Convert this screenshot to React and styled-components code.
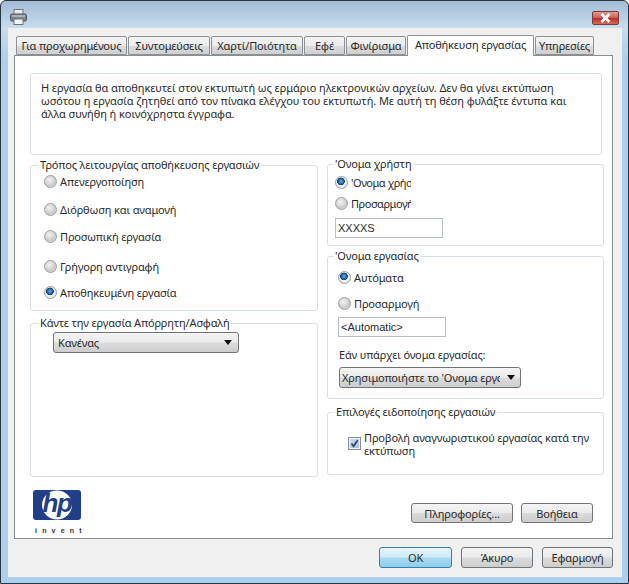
import React from 'react';
import styled, { createGlobalStyle } from 'styled-components';

const GlobalStyle = createGlobalStyle`
  html, body {
    margin: 0;
    padding: 0;
    background: #fff;
  }
  body {
    font-family: "Noto Sans", "DejaVu Sans", sans-serif;
    font-size: 11px;
    letter-spacing: -0.15px;
    color: #2a2a2a;
  }
`;

const Window = styled.div`
  box-sizing: border-box;
  width: 629px;
  height: 584px;
  display: flex;
  flex-direction: column;
  overflow: hidden;
  border: 1px solid #27343f;
  border-radius: 6px 6px 0 0;
  background: linear-gradient(#a3bcd3 0, #b4cde3 14px, #c9dcec 27px, #abcfec 60px);
`;

const TitleBar = styled.div`
  height: 27px;
  flex: none;
  display: flex;
  align-items: center;
  justify-content: space-between;
  padding: 5px 9px 0 9px;
  box-sizing: border-box;
`;

const CloseButton = styled.div`
  width: 27px;
  height: 14px;
  margin-top: 2px;
  display: flex;
  align-items: center;
  justify-content: center;
  border: 1px solid #7d3a38;
  border-radius: 2px;
  box-sizing: border-box;
  background: linear-gradient(#dc9c90 0, #d0625a 45%, #b8302a 55%, #d86a58 100%);
`;

const Client = styled.div`
  flex: 1;
  margin: 0 6px 6px 7px;
  padding: 7px 9px 0 6px;
  display: flex;
  flex-direction: column;
  min-height: 0;
  background: #f0f0f0;
`;

const TabRow = styled.div`
  display: flex;
  align-items: flex-end;
  height: 20px;
  padding-left: 2px;
  gap: 1px;
  position: relative;
  z-index: 1;
`;

const Tab = styled.div`
  box-sizing: border-box;
  width: ${p => p.$w}px;
  height: ${p => (p.$active ? 21 : 19)}px;
  margin: ${p => (p.$active ? '0 0 -1px 0' : '0')};
  padding-bottom: ${p => (p.$active ? 3 : 0)}px;
  display: flex;
  align-items: center;
  justify-content: center;
  white-space: nowrap;
  border: 1px solid #8e9297;
  border-bottom: ${p => (p.$active ? 'none' : '1px solid #8e9297')};
  border-radius: 2px 2px 0 0;
  background: ${p => (p.$active ? '#fff' : 'linear-gradient(#f4f4f4 0, #ececec 50%, #dcdcdc 52%, #cfcfcf 100%)')};
`;

const Panel = styled.div`
  box-sizing: border-box;
  height: 484px;
  padding: 17px 7px 0 15px;
  border: 1px solid #8a8d90;
  background: #fff;
`;

const Description = styled.div`
  box-sizing: border-box;
  height: 82px;
  margin-right: 3px;
  padding: 7px 10px;
  border: 1px solid #d5dfe5;
  border-radius: 3px;
  line-height: 13px;
  letter-spacing: -0.07px;
  white-space: nowrap;
`;

const Columns = styled.div`
  display: grid;
  grid-template-columns: 288px 277px;
  column-gap: 9px;
  margin-top: 3px;
`;

const Column = styled.div`
  display: flex;
  flex-direction: column;
  gap: ${p => p.$gap}px;
  margin-top: ${p => p.$top || 0}px;
`;

const Group = styled.fieldset`
  box-sizing: border-box;
  height: ${p => p.$h}px;
  margin: 0 0 ${p => p.$after || 0}px;
  min-width: 0;
  padding: 0 0 0 ${p => p.$left}px;
  border: 1px solid #d5dfe5;
  border-radius: 3px;
`;

const Legend = styled.legend`
  margin-left: ${p => p.$x - p.$left}px;
  padding: 0 2px;
  height: 12px;
  line-height: 12px;
  white-space: nowrap;
`;

const RadioRow = styled.div`
  display: flex;
  align-items: center;
  height: 14px;
  gap: 3px;
  margin-top: ${p => p.$top}px;
`;

const RadioDot = styled.span`
  box-sizing: border-box;
  width: 13px;
  height: 13px;
  flex: none;
  border-radius: 50%;
  border: 1px solid #9a9ea3;
  background: ${p => (p.$on
    ? 'radial-gradient(circle at 45% 40%, #6fb0e0 0, #1c5f9c 30%, #10406f 40%, #f0f2f4 46%, #dcdfe3 100%)'
    : 'radial-gradient(circle at 40% 35%, #f1f1f1 0, #d6d6d6 45%, #c8c8c8 60%, #ececec 100%)')};
`;

const RadioLabel = styled.span`
  display: block;
  white-space: nowrap;
  overflow: hidden;
  max-width: ${p => p.$max || 240}px;
  letter-spacing: ${p => p.$spacing ?? -0.15}px;
`;

const TextField = styled.div`
  box-sizing: border-box;
  width: 108px;
  height: 20px;
  margin-top: ${p => p.$top}px;
  padding-left: 2px;
  border: 1px solid #b5bcc4;
  line-height: 18px;
  letter-spacing: 0;
  font-family: "Liberation Sans", sans-serif;
`;

const Select = styled.div`
  box-sizing: border-box;
  width: ${p => p.$w}px;
  height: 21px;
  margin: ${p => p.$margin};
  padding: 0 ${p => p.$right}px 0 ${p => p.$pad}px;
  display: flex;
  align-items: center;
  justify-content: space-between;
  white-space: nowrap;
  border: 1px solid #70757a;
  border-radius: 3px;
  background: linear-gradient(#f4f4f4 0, #ebebeb 48%, #dcdcdc 52%, #cdcdcd 100%);
`;

const Arrow = styled.span`
  width: 0;
  height: 0;
  flex: none;
  border-left: 4px solid transparent;
  border-right: 4px solid transparent;
  border-top: 5px solid #111;
`;

const FieldCaption = styled.div`
  height: 13px;
  line-height: 13px;
  margin: 11px 0 0 1px;
`;

const CheckRow = styled.div`
  display: flex;
  gap: 3px;
  margin: 13px 0 0 20px;
  line-height: 13px;
`;

const CheckBox = styled.span`
  box-sizing: border-box;
  width: 13px;
  height: 13px;
  margin-top: 6px;
  flex: none;
  display: flex;
  align-items: center;
  justify-content: center;
  border: 1px solid #8b8f94;
  background: linear-gradient(135deg, #d2deec, #a8bed8);
  box-shadow: inset 0 0 0 1px #eef2f6;
`;

const Footer = styled.div`
  display: flex;
  justify-content: space-between;
  align-items: flex-start;
  padding: 0 12px 0 3px;
`;

const LogoBlock = styled.div`
  margin-top: 13px;
  width: 48px;
`;

const Invent = styled.div`
  margin-top: 4px;
  padding-left: 2px;
  font-family: "Liberation Sans", sans-serif;
  font-size: 7px;
  font-weight: bold;
  line-height: 8px;
  letter-spacing: 5.2px;
  white-space: nowrap;
  color: #333;
`;

const ButtonRow = styled.div`
  display: flex;
  justify-content: flex-end;
  gap: ${p => p.$gap}px;
  margin-top: ${p => p.$top}px;
`;

const Button = styled.div`
  box-sizing: border-box;
  width: ${p => p.$w}px;
  height: ${p => (p.$tall ? 21 : 20)}px;
  display: flex;
  align-items: center;
  justify-content: center;
  white-space: nowrap;
  border: 1px solid ${p => (p.$primary ? '#3d7ea8' : '#70757a')};
  border-radius: 3px;
  background: ${p => (p.$primary
    ? 'linear-gradient(#e8f5fb 0, #cdeaf8 48%, #a8d9f2 52%, #8fcdec 100%)'
    : 'linear-gradient(#f4f4f4 0, #ebebeb 48%, #dcdcdc 52%, #cdcdcd 100%)')};
`;

const PrinterIcon = () => (
  <svg width="17" height="16" viewBox="0 0 17 16">
    <rect x="4" y="0.5" width="9" height="5" fill="#e8eaec" stroke="#6f767c" />
    <rect x="0.5" y="5" width="16" height="7" rx="1.5" fill="#7d868d" stroke="#4c5358" />
    <rect x="2" y="6" width="13" height="2" fill="#a9b1b7" />
    <rect x="4" y="10" width="9" height="5.5" fill="#f2f3f4" stroke="#6f767c" />
  </svg>
);

const CloseIcon = () => (
  <svg width="11" height="10" viewBox="0 0 11 10">
    <path d="M1.5 1 L9.5 9 M9.5 1 L1.5 9" stroke="#fff" strokeWidth="2.6" />
  </svg>
);

const CheckIcon = () => (
  <svg width="9" height="9" viewBox="0 0 9 9">
    <path d="M1.5 4.5 L3.6 7.2 L7.6 1.2" fill="none" stroke="#2b3f78" strokeWidth="1.7" />
  </svg>
);

const HpLogo = () => (
  <svg width="48" height="30" viewBox="0 0 48 30">
    <rect width="48" height="30" rx="3" fill="#213f87" />
    <ellipse cx="24" cy="15" rx="15" ry="14.5" fill="#fff" />
    <text
      x="24"
      y="21.5"
      textAnchor="middle"
      fontFamily="Liberation Sans, sans-serif"
      fontStyle="italic"
      fontWeight="bold"
      fontSize="26"
      letterSpacing="-1.5"
      fill="#213f87"
    >
      hp
    </text>
  </svg>
);

const Radio = ({ on, top, max, spacing, children }) => (
  <RadioRow $top={top}>
    <RadioDot $on={on} />
    <RadioLabel $max={max} $spacing={spacing}>{children}</RadioLabel>
  </RadioRow>
);

const tabs = [
  { label: 'Για προχωρημένους', w: 111 },
  { label: 'Συντομεύσεις', w: 82 },
  { label: 'Χαρτί/Ποιότητα', w: 92 },
  { label: 'Εφέ', w: 41 },
  { label: 'Φινίρισμα', w: 60 },
  { label: 'Αποθήκευση εργασίας', w: 127, active: true },
  { label: 'Υπηρεσίες', w: 59 },
];

export default function App() {
  return (
    <>
      <GlobalStyle />
      <Window>
        <TitleBar>
          <PrinterIcon />
          <CloseButton><CloseIcon /></CloseButton>
        </TitleBar>
        <Client>
          <TabRow>
            {tabs.map(t => (
              <Tab key={t.label} $w={t.w} $active={t.active}>{t.label}</Tab>
            ))}
          </TabRow>
          <Panel>
            <Description>
              Η εργασία θα αποθηκευτεί στον εκτυπωτή ως ερμάριο ηλεκτρονικών αρχείων. Δεν θα γίνει εκτύπωση<br />
              ωσότου η εργασία ζητηθεί από τον πίνακα ελέγχου του εκτυπωτή. Με αυτή τη θέση φυλάξτε έντυπα και<br />
              άλλα συνήθη ή κοινόχρηστα έγγραφα.
            </Description>
            <Columns>
              <Column $gap={6} $top={1}>
                <Group $h={152} $left={13}>
                  <Legend $x={7} $left={13}>Τρόπος λειτουργίας αποθήκευσης εργασιών</Legend>
                  <Radio top={3}>Απενεργοποίηση</Radio>
                  <Radio top={14}>Διόρθωση και αναμονή</Radio>
                  <Radio top={13}>Προσωπική εργασία</Radio>
                  <Radio top={16}>Γρήγορη αντιγραφή</Radio>
                  <Radio top={12} on>Αποθηκευμένη εργασία</Radio>
                </Group>
                <Group $h={160} $left={22}>
                  <Legend $x={7} $left={22}>Κάντε την εργασία Απόρρητη/Ασφαλή</Legend>
                  <Select $w={186} $pad={4} $right={6} $margin="3px 0 0 0">
                    Κανένας
                    <Arrow />
                  </Select>
                </Group>
              </Column>
              <Column $gap={4}>
                <Group $h={88} $left={7}>
                  <Legend $x={5} $left={7}>'Ονομα χρήστη</Legend>
                  <Radio top={5} on max={60} spacing={-0.45}>'Ονομα χρήστη</Radio>
                  <Radio top={7} max={60} spacing={-0.45}>Προσαρμογή</Radio>
                  <TextField $top={8}>XXXXS</TextField>
                </Group>
                <Group $h={149} $after={3} $left={10}>
                  <Legend $x={5} $left={10}>'Ονομα εργασίας</Legend>
                  <Radio top={8} on>Αυτόματα</Radio>
                  <Radio top={12}>Προσαρμογή</Radio>
                  <TextField $top={7}>&lt;Automatic&gt;</TextField>
                  <FieldCaption>Εάν υπάρχει όνομα εργασίας:</FieldCaption>
                  <Select $w={182} $pad={2} $right={5} $margin="6px 0 0 1px">
                    <RadioLabel $max={158}>Χρησιμοποιήστε το 'Ονομα εργασίας</RadioLabel>
                    <Arrow />
                  </Select>
                </Group>
                <Group $h={69} $left={0}>
                  <Legend $x={6} $left={0}>Επιλογές ειδοποίησης εργασιών</Legend>
                  <CheckRow>
                    <CheckBox><CheckIcon /></CheckBox>
                    <span>Προβολή αναγνωριστικού εργασίας κατά την<br />εκτύπωση</span>
                  </CheckRow>
                </Group>
              </Column>
            </Columns>
            <Footer>
              <LogoBlock>
                <HpLogo />
                <Invent>invent</Invent>
              </LogoBlock>
              <ButtonRow $gap={8} $top={26}>
                <Button $w={102}>Πληροφορίες...</Button>
                <Button $w={72}>Βοήθεια</Button>
              </ButtonRow>
            </Footer>
          </Panel>
          <ButtonRow $gap={9} $top={8}>
            <Button $w={73} $tall $primary>ΟΚ</Button>
            <Button $w={72} $tall>Άκυρο</Button>
            <Button $w={71} $tall>Εφαρμογή</Button>
          </ButtonRow>
        </Client>
      </Window>
    </>
  );
}
